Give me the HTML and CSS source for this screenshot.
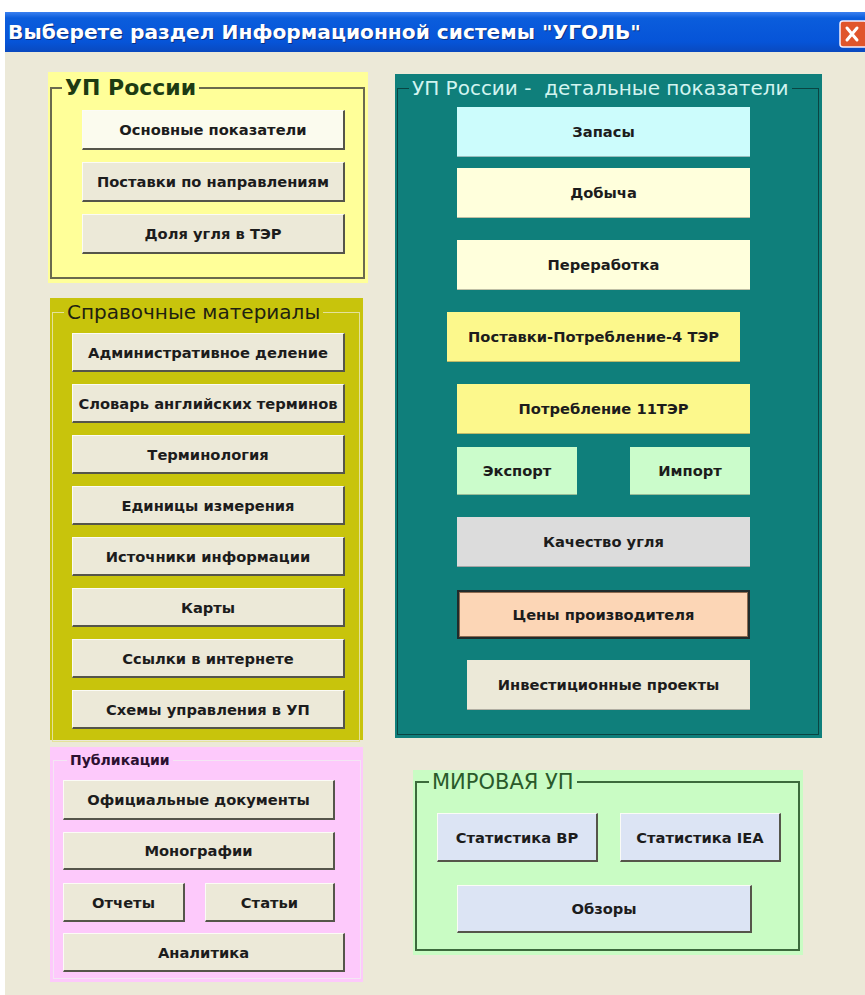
FILE: index.html
```html
<!DOCTYPE html>
<html lang="ru">
<head>
  <meta charset="UTF-8">
  <title>УГОЛЬ</title>
  <link rel="stylesheet" href="styles.css">
</head>
<body>
  <div class="window">
    <div class="titlebar">
      <span class="title">Выберете раздел Информационной системы "УГОЛЬ"</span>
      <span class="close">
        <svg width="26" height="28" viewBox="0 0 26 28">
          <rect x="1" y="1" width="27" height="26" rx="3" fill="#e0552c" stroke="#f4f0ff" stroke-width="1.5"/>
          <path d="M8 8 L18 20 M18 8 L8 20" stroke="#fff" stroke-width="3" stroke-linecap="round"/>
        </svg>
      </span>
    </div>
    <div class="body">
      <div class="col">
        <div class="panel p-russia">
          <fieldset class="group">
            <legend>УП России</legend>
            <div class="items">
              <button class="btn light">Основные показатели</button>
              <button class="btn">Поставки по направлениям</button>
              <button class="btn">Доля угля в ТЭР</button>
            </div>
          </fieldset>
        </div>
        <div class="panel p-ref">
          <fieldset class="group">
            <legend>Справочные материалы</legend>
            <div class="items">
              <button class="btn">Административное деление</button>
              <button class="btn">Словарь английских терминов</button>
              <button class="btn">Терминология</button>
              <button class="btn">Единицы измерения</button>
              <button class="btn">Источники информации</button>
              <button class="btn">Карты</button>
              <button class="btn">Ссылки в интернете</button>
              <button class="btn">Схемы управления в УП</button>
            </div>
          </fieldset>
        </div>
        <div class="panel p-pub">
          <fieldset class="group">
            <legend>Публикации</legend>
            <div class="items">
              <button class="btn docs">Официальные документы</button>
              <button class="btn mono">Монографии</button>
              <div class="pair">
                <button class="btn reports">Отчеты</button>
                <button class="btn articles">Статьи</button>
              </div>
              <button class="btn analytics">Аналитика</button>
            </div>
          </fieldset>
        </div>
      </div>
      <div class="col">
        <div class="panel p-detail">
          <fieldset class="group">
            <legend>УП России -&nbsp; детальные показатели</legend>
            <div class="items">
              <button class="btn flat cyan">Запасы</button>
              <button class="btn flat cream">Добыча</button>
              <button class="btn flat cream">Переработка</button>
              <button class="btn flat yellow shifted">Поставки-Потребление-4 ТЭР</button>
              <button class="btn flat yellow">Потребление 11ТЭР</button>
              <div class="pair trade">
                <button class="btn flat mint">Экспорт</button>
                <button class="btn flat mint">Импорт</button>
              </div>
              <button class="btn flat grey">Качество угля</button>
              <button class="btn focus">Цены производителя</button>
              <button class="btn flat invest">Инвестиционные проекты</button>
            </div>
          </fieldset>
        </div>
        <div class="panel p-world">
          <fieldset class="group">
            <legend>МИРОВАЯ УП</legend>
            <div class="items">
              <div class="pair stats">
                <button class="btn lav">Статистика BP</button>
                <button class="btn lav">Статистика IEA</button>
              </div>
              <button class="btn lav reviews">Обзоры</button>
            </div>
          </fieldset>
        </div>
      </div>
    </div>
  </div>
</body>
</html>
```
FILE: styles.css
```css
* {
  box-sizing: border-box;
}
body {
  margin: 0;
  background: #fff;
  font-family: 'DejaVu Sans', sans-serif;
}
.window {
  margin: 12px 0 0 5px;
  width: 860px;
  height: 983px;
  background: #ece9d8;
  overflow: hidden;
}
.titlebar {
  height: 40px;
  display: flex;
  align-items: center;
  justify-content: space-between;
  padding-left: 3px;
  background: linear-gradient(#3a80f0, #0b5ddc 15%, #0654d8 75%, #0a49bf);
}
.title {
  color: #fff;
  font-weight: bold;
  font-size: 20.2px;
  text-shadow: 1px 1px 0 #0a2f80;
}
.close {
  display: flex;
  margin-top: 3px;
}
.body {
  display: grid;
  grid-template-columns: 320px 427px;
  column-gap: 27px;
  padding-left: 43px;
}
.col {
  display: flex;
  flex-direction: column;
  align-items: flex-start;
}
.panel {
  display: flex;
  flex-direction: column;
}
.group {
  flex: 1;
  margin: 0;
  min-width: 0;
  padding: 0;
}
.group legend {
  padding: 0 3px;
}
.items {
  display: flex;
  flex-direction: column;
  align-items: flex-start;
}

/* buttons */
.btn {
  display: block;
  font-family: 'DejaVu Sans', sans-serif;
  font-weight: bold;
  font-size: 14.7px;
  color: #1c1c1c;
  background: #ece9d8;
  border-style: solid;
  border-width: 1px 2px 2px 1px;
  border-color: #fbfbf6 #55554a #55554a #fbfbf6;
  padding: 0;
  white-space: nowrap;
  cursor: pointer;
}
.btn.light {
  background: #fbfbee;
}
.btn.flat {
  border: none;
  border-bottom: 1px solid rgba(0, 0, 0, 0.25);
}
.pair {
  display: flex;
}

/* УП России */
.p-russia {
  margin-top: 20px;
  width: 320px;
  height: 211px;
  padding: 4px 3px 4px 2px;
  background: #ffff99;
}
.p-russia .group {
  border: 2px solid #6a6a4e;
}
.p-russia .items {
  padding: 10px 0 0 30px;
}
.p-russia legend {
  margin-left: 10px;
  font-weight: bold;
  font-size: 22px;
  line-height: 24px;
  color: #1d3b12;
}
.p-russia .btn {
  width: 263px;
  height: 40px;
  margin-bottom: 12px;
}

/* Справочные материалы */
.p-ref {
  margin-top: 15px;
  margin-left: 2px;
  width: 313px;
  height: 442px;
  padding: 2px 3px 5px 2px;
  background: #c8c40c;
}
.p-ref .group {
  border: 1px solid #e4e29a;
}
.p-ref .items {
  padding: 9px 0 0 19px;
}
.p-ref legend {
  margin-left: 11px;
  font-size: 20px;
  line-height: 24px;
  color: #1f2210;
}
.p-ref .btn {
  width: 273px;
  height: 39px;
  margin-bottom: 12px;
}

/* Публикации */
.p-pub {
  margin-top: 7px;
  margin-left: 2px;
  width: 313px;
  height: 235px;
  padding: 4px 2px 3px 3px;
  background: #fdc9fb;
}
.p-pub .group {
  border: 1px solid #f3e6f3;
}
.p-pub .items {
  padding: 11px 0 0 9px;
}
.p-pub legend {
  margin-left: 13px;
  font-weight: bold;
  font-size: 14px;
  line-height: 18px;
  color: #2c1030;
}
.p-pub .btn {
  height: 39px;
}
.p-pub .docs {
  width: 272px;
  height: 40px;
}
.p-pub .mono {
  width: 272px;
  height: 38px;
  margin-top: 12px;
}
.p-pub .pair {
  margin-top: 13px;
  gap: 20px;
}
.p-pub .reports {
  width: 122px;
}
.p-pub .articles {
  width: 130px;
}
.p-pub .analytics {
  width: 282px;
  margin-top: 11px;
}

/* детальные показатели */
.p-detail {
  margin-top: 22px;
  width: 427px;
  height: 664px;
  padding: 3px 3px 3px 2px;
  background: #0f7f7b;
}
.p-detail .group {
  border: 1px solid #0a4442;
}
.p-detail .items {
  padding: 8px 0 0 59px;
}
.p-detail legend {
  margin-left: 11px;
  font-size: 20px;
  line-height: 22px;
  color: #d2f4f0;
}
.p-detail .btn {
  width: 293px;
  height: 50px;
  margin-bottom: 22px;
}
.p-detail .shifted {
  margin-left: -10px;
}
.p-detail .yellow {
  background: #fcf88c;
}
.p-detail .cyan {
  background: #ccfcfc;
  margin-bottom: 11px;
}
.p-detail .cream {
  background: #ffffdc;
}
.p-detail .trade {
  width: 293px;
  justify-content: space-between;
  margin-top: -9px;
  margin-bottom: 22px;
}
.p-detail .trade .btn {
  width: 120px;
  height: 48px;
  margin: 0;
}
.p-detail .mint {
  background: #cbfccb;
}
.p-detail .grey {
  background: #dcdcdc;
  margin-bottom: 23px;
}
.p-detail .focus {
  height: 49px;
  background: #fcd6b6;
  border: 2px solid #1f2c2c;
  box-shadow: inset 0 0 0 1px #8c6a50;
  margin-bottom: 21px;
}
.p-detail .invest {
  width: 283px;
  margin-left: 10px;
}

/* МИРОВАЯ УП */
.p-world {
  margin-top: 32px;
  margin-left: 18px;
  width: 390px;
  height: 185px;
  padding: 1px 3px 4px 2px;
  background: #c9fcc4;
}
.p-world .group {
  border: 2px solid #3c6a3c;
}
.p-world .items {
  padding: 20px 0 0 20px;
}
.p-world legend {
  margin-left: 12px;
  font-size: 21px;
  line-height: 22px;
  color: #2a5a2a;
}
.p-world .lav {
  background: #dce4f4;
  height: 49px;
}
.p-world .stats {
  gap: 22px;
}
.p-world .stats .btn {
  width: 161px;
}
.p-world .reviews {
  width: 295px;
  height: 48px;
  margin-top: 23px;
  margin-left: 20px;
}
```
